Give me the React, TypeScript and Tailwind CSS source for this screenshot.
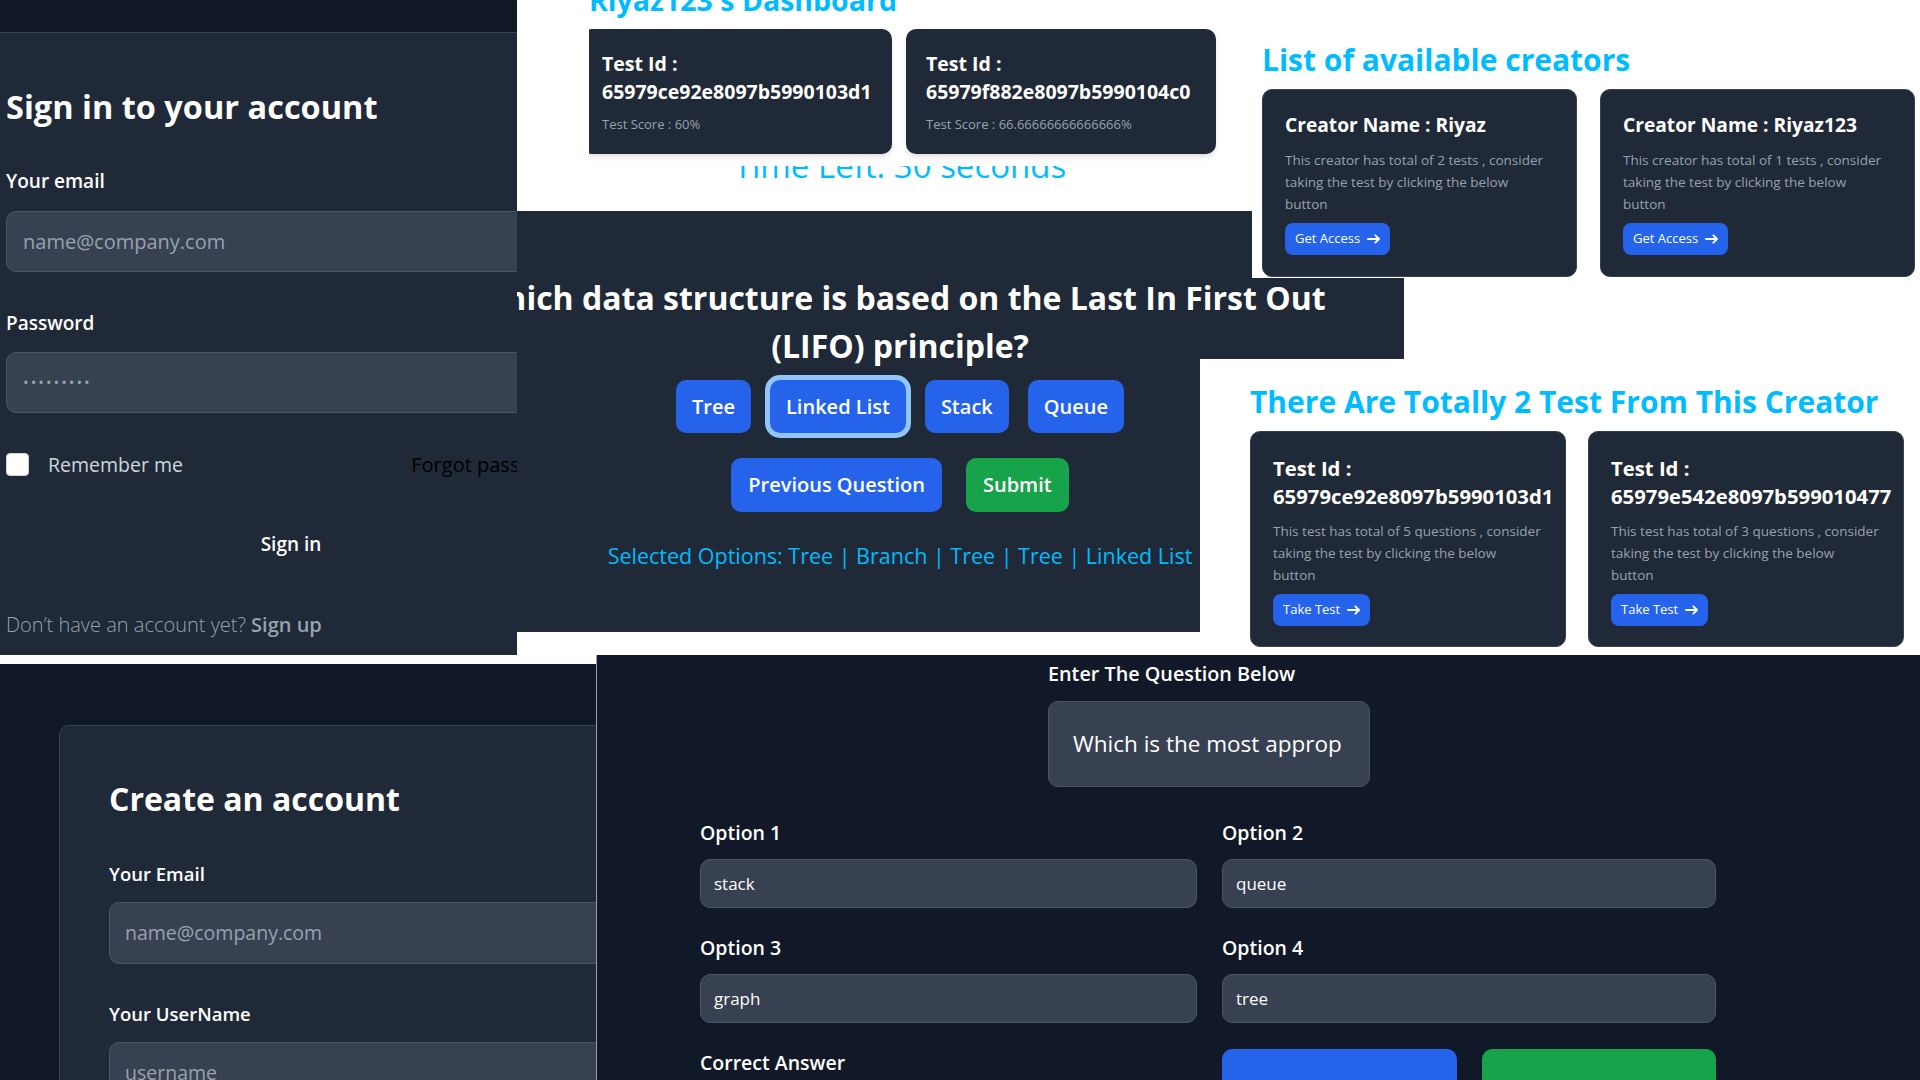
import { useState } from "react";

const Arrow = () => (
  <svg className="h-[10px] w-[13px]" viewBox="0 0 14 10" fill="none">
    <path d="M1 5h12m0 0L9 1m4 4L9 9" stroke="currentColor" strokeWidth="2" strokeLinecap="round" strokeLinejoin="round" />
  </svg>
);

// quiz screen, sits under the other screenshots
function QuizPanel() {
  const [selected, setSelected] = useState("Linked List");
  const options = ["Tree", "Linked List", "Stack", "Queue"];
  return (
    <div className="absolute left-[396px] top-[130px] flex h-[502px] w-[1008px] flex-col overflow-hidden bg-white">
      <p className="h-[81px] pt-[19px] text-center text-[33px] leading-none text-sky-400">Time Left: 30 seconds</p>
      <div className="flex flex-1 flex-col items-center bg-[#1f2937] pt-[63px]">
        <h2 className="whitespace-nowrap text-center text-[32px] font-bold leading-[48px] text-white">
          Which data structure is based on the Last In First Out
          <br />
          (LIFO) principle?
        </h2>
        <div className="mt-[10px] flex gap-[19px]">
          {options.map((o) => (
            <button
              key={o}
              onClick={() => setSelected(o)}
              className={
                "h-[53px] rounded-[10px] bg-[#2563eb] px-[16px] text-[20px] font-semibold text-white " +
                (selected === o ? "ring-[5px] ring-[#93c5fd]" : "")
              }
            >
              {o}
            </button>
          ))}
        </div>
        <div className="mt-[25px] flex gap-[24px]">
          <button className="h-[54px] rounded-[10px] bg-[#2563eb] px-[17px] text-[20px] font-semibold text-white">Previous Question</button>
          <button className="h-[54px] rounded-[10px] bg-[#16a34a] px-[17px] text-[20px] font-semibold text-white">Submit</button>
        </div>
        <p className="mt-[28px] text-[21.5px] leading-[32px] text-sky-400">
          Selected Options: Tree | Branch | Tree | Tree | Linked List
        </p>
      </div>
    </div>
  );
}

function DashboardPanel() {
  const tests = [
    { id: "65979ce92e8097b5990103d1", score: "60%" },
    { id: "65979f882e8097b5990104c0", score: "66.66666666666666%" },
  ];
  return (
    <div className="absolute left-[589px] top-0 h-[166px] w-[663px] overflow-hidden bg-white">
      <h1 className="-mt-[14px] whitespace-nowrap text-[28.5px] font-bold leading-[28px] text-sky-400">Riyaz123's Dashboard</h1>
      <div className="-ml-[7px] mt-[15px] flex gap-[14px]">
        {tests.map((t) => (
          <div key={t.id} className="h-[125px] w-[310px] rounded-[10px] bg-[#1f2937] px-[20px] pt-[21px] shadow-md">
            <p className="text-[19.5px] font-bold leading-[28px] text-white">Test Id :</p>
            <p className="text-[19.5px] font-bold leading-[28px] text-white">{t.id}</p>
            <p className="mt-[8px] text-[13px] leading-[20px] text-gray-400">Test Score : {t.score}</p>
          </div>
        ))}
      </div>
    </div>
  );
}

function CreatorsPanel() {
  const creators = [
    { name: "Riyaz", count: 2 },
    { name: "Riyaz123", count: 1 },
  ];
  return (
    <div className="absolute left-[1252px] top-0 h-[278px] w-[668px] overflow-hidden bg-white pl-[10px] pt-[45px]">
      <h2 className="whitespace-nowrap text-[30px] font-bold leading-[30px] text-sky-400">List of available creators</h2>
      <div className="mt-[14px] flex gap-[23px]">
        {creators.map((c) => (
          <div key={c.name} className="h-[188px] w-[315px] shrink-0 rounded-[10px] border border-gray-700 bg-[#1f2937] px-[22px] pt-[21px]">
            <p className="text-[19.2px] font-bold leading-[28px] text-white">Creator Name : {c.name}</p>
            <p className="mt-[10px] whitespace-nowrap text-[13.5px] leading-[22px] text-gray-400">
              This creator has total of {c.count} tests , consider
              <br />
              taking the test by clicking the below
              <br />
              button
            </p>
            <button className="mt-[8px] flex h-[32px] items-center gap-[7px] rounded-[8px] bg-[#2563eb] px-[10px] text-[13px] font-medium text-white">
              Get Access <Arrow />
            </button>
          </div>
        ))}
      </div>
    </div>
  );
}

function CreatorTestsPanel() {
  const tests = [
    { id: "65979ce92e8097b5990103d1", q: 5 },
    { id: "65979e542e8097b599010477", q: 3 },
  ];
  return (
    <div className="absolute left-[1200px] top-[359px] h-[296px] w-[720px] overflow-hidden bg-white pl-[50px] pt-[28px]">
      <h2 className="whitespace-nowrap text-[30px] font-bold leading-[30px] text-sky-400">There Are Totally 2 Test From This Creator</h2>
      <div className="mt-[14px] flex gap-[22px]">
        {tests.map((t) => (
          <div key={t.id} className="h-[216px] w-[316px] shrink-0 rounded-[10px] border border-gray-700 bg-[#1f2937] px-[22px] pt-[22px]">
            <p className="text-[20.3px] font-bold leading-[28px] text-white">Test Id :</p>
            <p className="whitespace-nowrap text-[20.3px] font-bold leading-[28px] text-white">{t.id}</p>
            <p className="mt-[10px] whitespace-nowrap text-[13.5px] leading-[22px] text-gray-400">
              This test has total of {t.q} questions , consider
              <br />
              taking the test by clicking the below
              <br />
              button
            </p>
            <button className="mt-[8px] flex h-[32px] items-center gap-[7px] rounded-[8px] bg-[#2563eb] px-[10px] text-[13px] font-medium text-white">
              Take Test <Arrow />
            </button>
          </div>
        ))}
      </div>
    </div>
  );
}

function SignInPanel() {
  const [email, setEmail] = useState("");
  return (
    <div className="absolute left-0 top-0 h-[655px] w-[517px] overflow-hidden bg-[#1f2937]">
      <div className="h-[33px] border-b border-gray-700 bg-[#111827]" />
      <div className="ml-[6px] w-[570px]">
        <h1 className="mt-[54px] whitespace-nowrap text-[32.5px] font-bold leading-[40px] text-white">Sign in to your account</h1>
        <label className="mt-[40px] block text-[19px] font-semibold leading-[28px] text-white">Your email</label>
        <input
          value={email}
          onChange={(e) => setEmail(e.target.value)}
          placeholder="name@company.com"
          className="mt-[16px] h-[61px] w-full rounded-[10px] border border-gray-600 bg-[#374151] px-[16px] text-[20px] text-white placeholder-gray-400 outline-none"
        />
        <label className="mt-[37px] block text-[19px] font-semibold leading-[28px] text-white">Password</label>
        <div className="mt-[15px] flex h-[61px] w-full items-center rounded-[10px] border border-gray-600 bg-[#374151] px-[16px] text-[15px] tracking-[2px] text-gray-400">
          •••••••••
        </div>
        <div className="mt-[40px] flex h-[23px] items-center justify-between">
          <div className="flex items-center gap-[19px]">
            <div className="h-[23px] w-[23px] rounded-[4px] border border-gray-300 bg-white" />
            <span className="text-[19.5px] text-gray-300">Remember me</span>
          </div>
          <span className="text-[20px] font-medium text-black">Forgot password?</span>
        </div>
        <button className="mt-[43px] h-[50px] w-full text-[19px] font-semibold text-white">Sign in</button>
        <p className="mt-[42px] whitespace-nowrap text-[20px] font-light leading-[28px] text-gray-400">
          Don’t have an account yet? <span className="font-semibold">Sign up</span>
        </p>
      </div>
    </div>
  );
}

function SignUpPanel() {
  return (
    <div className="absolute left-0 top-[664px] h-[416px] w-[596px] overflow-hidden bg-[#111827] pl-[59px] pt-[61px]">
      <div className="h-[500px] w-[700px] rounded-[10px] border border-gray-700 bg-[#1f2937] pl-[49px] pt-[53px]">
        <h1 className="whitespace-nowrap text-[32px] font-bold leading-[40px] text-white">Create an account</h1>
        <label className="mt-[41px] block text-[18.5px] font-semibold leading-[28px] text-white">Your Email</label>
        <div className="mt-[14px] flex h-[62px] w-[600px] items-center rounded-[10px] border border-gray-600 bg-[#374151] px-[15px] text-[19.5px] text-gray-400">
          name@company.com
        </div>
        <label className="mt-[36px] block text-[18.5px] font-semibold leading-[28px] text-white">Your UserName</label>
        <div className="mt-[14px] flex h-[62px] w-[600px] items-center rounded-[10px] border border-gray-600 bg-[#374151] px-[15px] text-[19.5px] text-gray-400">
          username
        </div>
      </div>
    </div>
  );
}

function QuestionFormPanel() {
  const opts = [
    { label: "Option 1", value: "stack" },
    { label: "Option 2", value: "queue" },
    { label: "Option 3", value: "graph" },
    { label: "Option 4", value: "tree" },
  ];
  return (
    <div className="absolute left-[596px] top-[655px] h-[425px] w-[1324px] overflow-hidden border-l border-gray-400 bg-[#111827] pt-[5px]">
      <div className="pl-[451px]">
        <p className="text-[19.8px] font-semibold leading-[28px] text-white">Enter The Question Below</p>
        <div className="mt-[13px] flex h-[86px] w-[322px] items-center overflow-hidden whitespace-nowrap rounded-[10px] border border-gray-600 bg-[#374151] px-[24px] text-[22.5px] text-white">
          Which is the most approp
        </div>
      </div>
      <div className="ml-[103px] mt-[32px] grid grid-cols-[497px_494px] gap-x-[25px] gap-y-[26px]">
        {opts.map((o) => (
          <div key={o.label}>
            <p className="text-[19.5px] font-semibold leading-[28px] text-white">{o.label}</p>
            <div className="mt-[12px] flex h-[49px] items-center rounded-[10px] border border-gray-600 bg-[#374151] px-[13px] text-[17px] text-white">
              {o.value}
            </div>
          </div>
        ))}
        <p className="text-[19.5px] font-semibold leading-[28px] text-white">Correct Answer</p>
        <div className="flex gap-[25px]">
          <div className="h-[60px] w-[235px] rounded-[10px] bg-[#2563eb]" />
          <div className="h-[60px] w-[234px] rounded-[10px] bg-[#16a34a]" />
        </div>
      </div>
    </div>
  );
}

export default function App() {
  return (
    <div className="relative h-[1080px] w-[1920px] overflow-hidden bg-white font-['Open_Sans',sans-serif]">
      <QuizPanel />
      <DashboardPanel />
      <CreatorsPanel />
      <CreatorTestsPanel />
      <SignInPanel />
      <SignUpPanel />
      <QuestionFormPanel />
    </div>
  );
}
